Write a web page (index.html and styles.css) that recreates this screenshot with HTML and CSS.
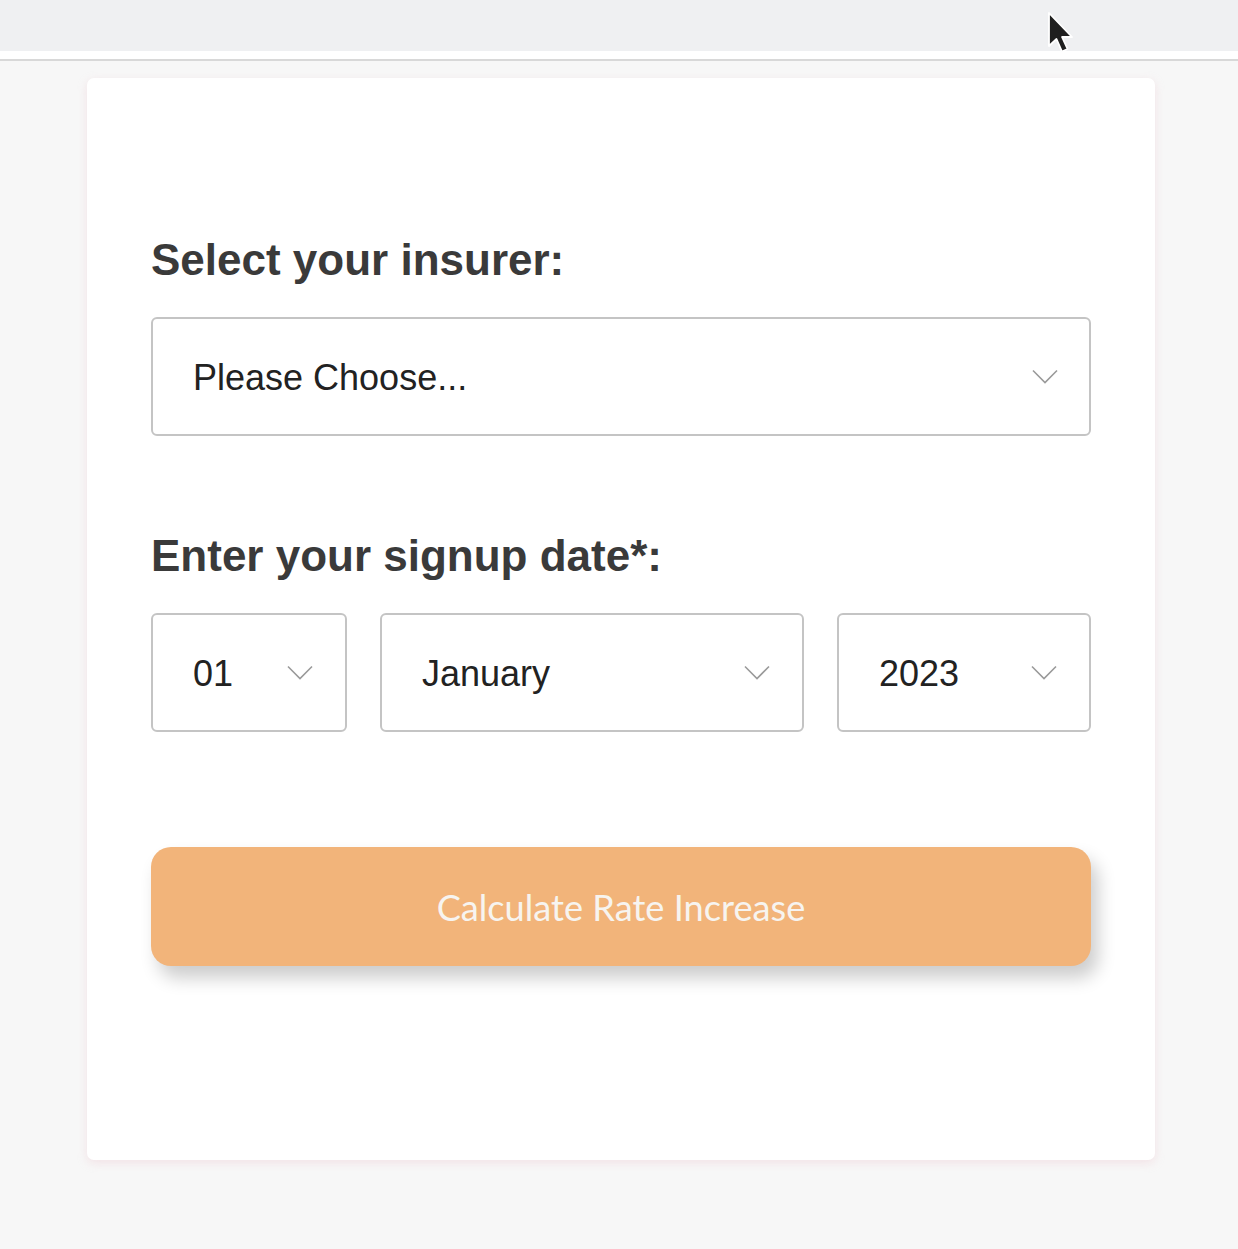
FILE: index.html
```html
<!DOCTYPE html>
<html lang="en">
<head>
<meta charset="utf-8">
<title>Rate Increase Calculator</title>
<link rel="stylesheet" href="styles.css">
</head>
<body>
<div class="topbar"></div>
<div class="topgap"></div>
<div class="page">
  <div class="card">
    <div class="field">
      <h2 class="label">Select your insurer:</h2>
      <div class="select select-full">
        <span class="select-text">Please Choose...</span>
        <svg class="chev" width="26" height="16" viewBox="0 0 26 16"><path d="M1 1.5 L13 13.5 L25 1.5" fill="none" stroke="#9a9a9a" stroke-width="1.6"/></svg>
      </div>
    </div>
    <div class="field">
      <h2 class="label">Enter your signup date*:</h2>
      <div class="date-row">
        <div class="select select-day">
          <span class="select-text">01</span>
          <svg class="chev" width="26" height="16" viewBox="0 0 26 16"><path d="M1 1.5 L13 13.5 L25 1.5" fill="none" stroke="#9a9a9a" stroke-width="1.6"/></svg>
        </div>
        <div class="select select-month">
          <span class="select-text">January</span>
          <svg class="chev" width="26" height="16" viewBox="0 0 26 16"><path d="M1 1.5 L13 13.5 L25 1.5" fill="none" stroke="#9a9a9a" stroke-width="1.6"/></svg>
        </div>
        <div class="select select-year">
          <span class="select-text">2023</span>
          <svg class="chev" width="26" height="16" viewBox="0 0 26 16"><path d="M1 1.5 L13 13.5 L25 1.5" fill="none" stroke="#9a9a9a" stroke-width="1.6"/></svg>
        </div>
      </div>
    </div>
    <button class="calc-btn" type="button">Calculate Rate Increase</button>
  </div>
</div>
<svg class="cursor" width="30" height="46" viewBox="0 0 30 46"><path d="M2 2 L2 35 L9.5 28 L15 40.5 L20.5 38 L15 26 L25 26 Z" fill="#1f1f1f" stroke="#ffffff" stroke-width="1.8" stroke-linejoin="round"/></svg>
</body>
</html>
```
FILE: styles.css
```css
html, body {
  margin: 0;
  padding: 0;
}
body {
  background: #f7f7f7;
  font-family: "Liberation Sans", Arial, sans-serif;
  min-height: 1249px;
  position: relative;
}
.topbar {
  height: 51px;
  background: #eff0f2;
}
.topgap {
  height: 8px;
  background: #ffffff;
  border-bottom: 2px solid #d8d8d8;
}
.page {
  padding-top: 17px;
}
.card {
  margin-left: 87px;
  width: 1068px;
  height: 1082px;
  box-sizing: border-box;
  background: #ffffff;
  border-radius: 7px;
  box-shadow: 0 3px 10px rgba(235, 190, 200, 0.35);
  padding: 157px 64px 0 64px;
}
.field {
  margin-bottom: 95px;
}
.field + .field {
  margin-bottom: 115px;
}
.label {
  margin: 0 0 32px 0;
  font-size: 44px;
  line-height: 50px;
  font-weight: 700;
  color: #3a3a3a;
}
.select {
  box-sizing: border-box;
  height: 119px;
  border: 2px solid #c4c4c4;
  border-radius: 6px;
  background: #ffffff;
  display: flex;
  align-items: center;
  justify-content: space-between;
  padding: 0 31px 0 40px;
}
.select-text {
  font-size: 36px;
  color: #222222;
  padding-top: 2px;
}
.chev {
  display: block;
}
.date-row {
  display: flex;
  gap: 33px;
}
.select-day { width: 196px; padding-right: 32px; }
.select-month { width: 424px; padding-right: 32px; }
.select-year { flex: 1; padding-right: 32px; }
.calc-btn {
  display: block;
  width: 100%;
  height: 119px;
  border: none;
  border-radius: 20px;
  background: #f2b47a;
  color: #f7f4f0;
  font-family: Lato, "Liberation Sans", sans-serif;
  font-size: 36.2px;
  box-shadow: 7px 12px 18px rgba(0, 0, 0, 0.2);
  cursor: pointer;
}
.cursor {
  position: absolute;
  left: 1047px;
  top: 11px;
}
```
